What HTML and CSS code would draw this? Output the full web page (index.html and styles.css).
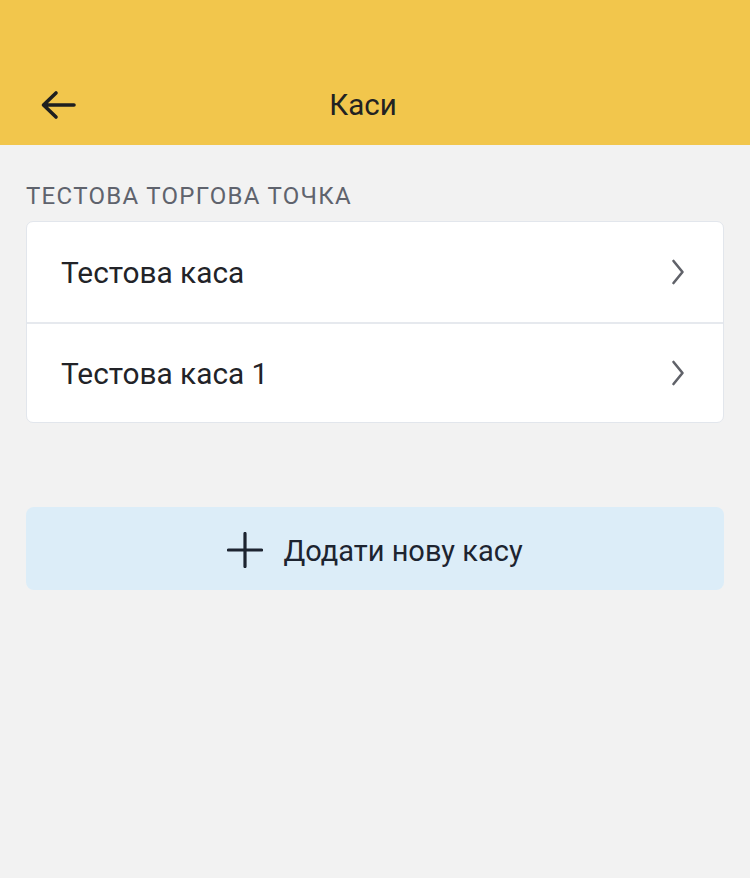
FILE: index.html
```html
<!DOCTYPE html>
<html lang="uk">
<head>
<meta charset="utf-8">
<link rel="stylesheet" href="styles.css">
</head>
<body>
<header class="topbar">
  <button class="back" aria-label="Назад">
    <svg width="36" height="30" viewBox="0 0 36 30"><path d="M34 15H4M16 3L3.5 15L16 27" fill="none" stroke="#1f1f1f" stroke-width="3.6" stroke-linecap="round" stroke-linejoin="round"/></svg>
  </button>
  <h1 class="title">Каси</h1>
</header>
<main class="content">
  <div class="section-label">ТЕСТОВА ТОРГОВА ТОЧКА</div>
  <ul class="card">
    <li class="row"><span>Тестова каса</span>
      <svg class="chev" width="14" height="26" viewBox="0 0 14 26"><path d="M2.5 2L11.5 13L2.5 24" fill="none" stroke="#606269" stroke-width="2.6" stroke-linecap="round" stroke-linejoin="round"/></svg></li>
    <li class="row"><span>Тестова каса 1</span>
      <svg class="chev" width="14" height="26" viewBox="0 0 14 26"><path d="M2.5 2L11.5 13L2.5 24" fill="none" stroke="#606269" stroke-width="2.6" stroke-linecap="round" stroke-linejoin="round"/></svg></li>
  </ul>
  <button class="add">
    <svg width="36" height="36" viewBox="0 0 36 36"><path d="M18 1.5V34.5M1.5 18H34.5" stroke="#1d2430" stroke-width="3.2" stroke-linecap="round"/></svg>
    <span>Додати нову касу</span>
  </button>
</main>
</body>
</html>
```
FILE: styles.css
```css
* { box-sizing: border-box; }
html, body { margin: 0; padding: 0; }
body {
  width: 750px;
  height: 878px;
  background: #f2f2f2;
  font-family: Roboto, "Noto Sans", sans-serif;
  color: #202124;
  overflow: hidden;
}
.topbar {
  height: 145px;
  background: #f2c64c;
  display: flex;
  align-items: center;
  padding: 65px 0 0 40px;
}
.back {
  background: none;
  border: 0;
  padding: 0;
  width: 36px;
  height: 30px;
  display: flex;
}
.title {
  margin: 0;
  flex: 1;
  text-align: center;
  font-size: 29.5px;
  font-weight: 400;
  color: #222;
  padding-right: 100px;
}
.content {
  padding: 36px 26px 0 26px;
}
.section-label {
  font-size: 24px;
  color: #5f636d;
  letter-spacing: 1.3px;
  line-height: 30px;
  margin-bottom: 10px;
}
.card {
  list-style: none;
  margin: 0;
  padding: 0;
  background: #fff;
  border: 1.5px solid #e2e6ec;
  border-radius: 7px;
  overflow: hidden;
}
.row {
  height: 100px;
  display: flex;
  align-items: center;
  justify-content: space-between;
  padding: 0 38px 0 34px;
  font-size: 29.8px;
  color: #222328;
}
.row + .row { border-top: 2px solid #e6e9ee; }
.add {
  margin-top: 84px;
  width: 100%;
  height: 83px;
  background: #dcedf8;
  border: 0;
  border-radius: 8px;
  display: flex;
  align-items: center;
  justify-content: center;
  gap: 20px;
  font-family: inherit;
  font-size: 29px;
  color: #1d2430;
  padding: 2px 0 0 0;
}
.add span { line-height: 1; padding-top: 4px; }
```
